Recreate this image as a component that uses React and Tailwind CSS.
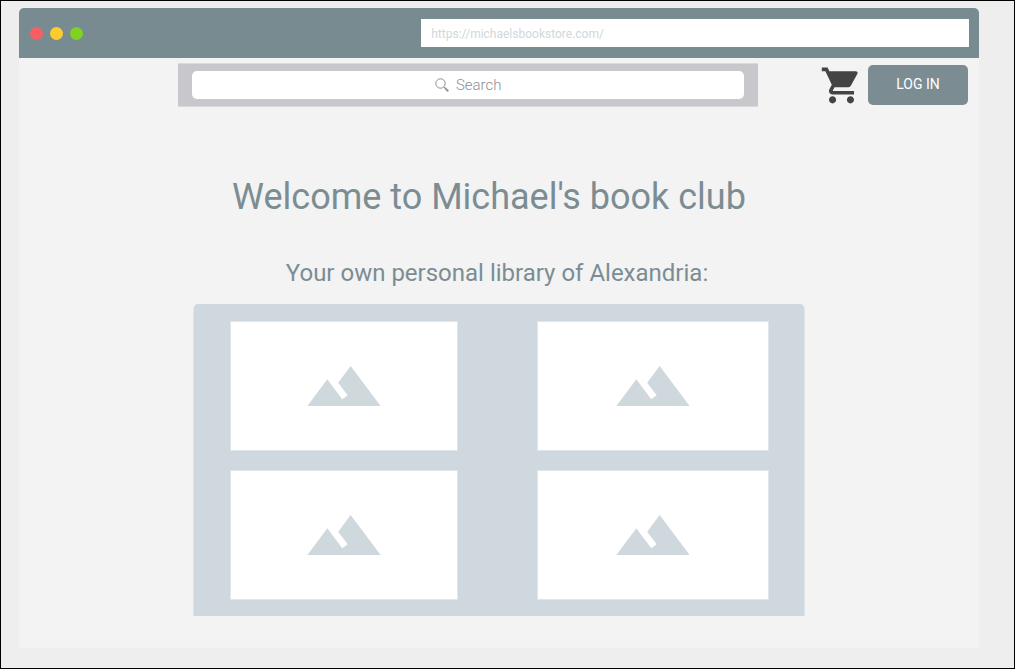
import { MdShoppingCart } from "react-icons/md";

const books = ["Book 1", "Book 2", "Book 3", "Book 4"];

function Landscape() {
  return (
    <svg viewBox="0 0 24 24" className="size-20 fill-[#cfd8dc]" aria-hidden="true">
      <path d="M14 6l-3.75 5 2.85 3.8-1.6 1.2C9.81 13.75 7 10 7 10l-6 8h22L14 6z" />
    </svg>
  );
}

function TitleBar() {
  return (
    <div className="flex h-[50px] items-center rounded-t-[5px] bg-[#788b90] pr-[10px] pl-[11px]">
      <div className="flex flex-1 gap-[7px]">
        <span className="size-[13px] rounded-full bg-[#f95f62]" />
        <span className="size-[13px] rounded-full bg-[#ffcc2c]" />
        <span className="size-[13px] rounded-full bg-[#7ed321]" />
      </div>
      <input
        type="text"
        aria-label="Address"
        defaultValue="https://michaelsbookstore.com/"
        className="h-7 w-7/12 bg-white px-[10px] pt-0.5 text-xs text-[#cfd8dc] outline-none"
      />
    </div>
  );
}

function Header() {
  return (
    <header className="flex items-center pt-[5px] pr-[11px] pl-[159px]">
      <div className="flex-1 border-y border-[#dadadd] bg-[#c8c7cc] px-[14px] py-[7px]">
        <label className="flex h-7 items-center gap-[7px] rounded-[5px] bg-white pl-[44%] text-[#8e8e93]">
          <svg viewBox="0 0 14 14" className="size-[14px] shrink-0 fill-none stroke-current" aria-hidden="true">
            <circle cx="5.5" cy="5.5" r="4.7" strokeWidth="1" />
            <path d="M9 9l1.5 1.5" strokeWidth="1" />
            <path d="M10 10l3.3 3.3" strokeWidth="1.8" />
          </svg>
          <input
            type="search"
            aria-label="Search"
            placeholder="Search"
            className="w-full min-w-0 bg-transparent text-[15px] font-light outline-none placeholder:text-[#8e8e93]"
          />
        </label>
      </div>
      <button type="button" aria-label="Cart" className="ml-[62px] text-[#444444]">
        <MdShoppingCart size={43} />
      </button>
      <button type="button" className="ml-[5px] h-10 w-[100px] rounded-[5px] bg-[#7b8d93] pb-0.5 text-sm text-white">
        LOG IN
      </button>
    </header>
  );
}

export default function App() {
  return (
    <div className="min-h-screen border border-black bg-[#eeeeee] pt-[7px] pr-[35px] pb-5 pl-[18px] font-[Roboto,sans-serif]">
      <TitleBar />
      <div className="bg-[#f3f3f3] pb-8">
        <Header />
        <main className="flex flex-col items-center text-[#7b8d93]">
          <h1 className="mt-[66px] pr-5 text-4xl leading-12">Welcome to Michael's book club</h1>
          <h2 className="mt-9 pr-1 text-2xl leading-8">Your own personal library of Alexandria:</h2>
          <section
            aria-label="Library"
            className="mt-[15px] grid w-[612px] max-w-full grid-cols-[228fr_232fr] gap-x-[79px] gap-y-[19px] rounded-t-[5px] border-x border-[#dfe5e8] bg-[#cfd8de] pt-[17px] pr-[35px] pb-4 pl-9"
          >
            {books.map((book) => (
              <a
                key={book}
                href="#"
                aria-label={book}
                className="flex h-[130px] items-center justify-center border border-[#e0e7e9] bg-white"
              >
                <Landscape />
              </a>
            ))}
          </section>
        </main>
      </div>
    </div>
  );
}
